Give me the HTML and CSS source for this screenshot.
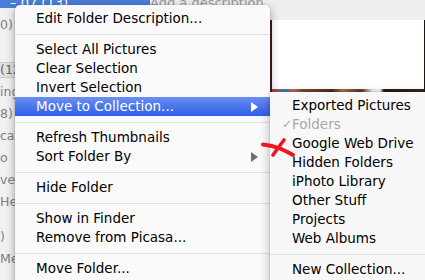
FILE: index.html
```html
<!DOCTYPE html>
<html>
<head>
<meta charset="utf-8">
<link rel="stylesheet" href="styles.css">
</head>
<body>
<div class="screen">
  <div class="bg">
    <div class="sidebar">
      <div class="selbar"><span>– 07 (13)</span></div>
      <div class="srow tall">0)</div>
      <div class="gap20"></div>
      <div class="shead">(12</div>
      <div class="gap3"></div>
      <div class="srow">ing</div>
      <div class="srow">8)</div>
      <div class="srow">cat</div>
      <div class="srow">o</div>
      <div class="srow">ve</div>
      <div class="srow">He</div>
      <div class="gap13"></div>
      <div class="srow">)</div>
      <div class="srow">Me</div>
    </div>
    <div class="main">
      <div class="desc"><span>Add a description</span></div>
      <div class="photo"><div class="photo-white"></div><div class="photo-strip"></div></div>
    </div>
  </div>

  <div class="menu">
    <div class="item">Edit Folder Description...</div>
    <div class="sep"></div>
    <div class="item">Select All Pictures</div>
    <div class="item">Clear Selection</div>
    <div class="item">Invert Selection</div>
    <div class="item active"><span>Move to Collection...</span><span class="arrow white"></span></div>
    <div class="sep"></div>
    <div class="item">Refresh Thumbnails</div>
    <div class="item"><span>Sort Folder By</span><span class="arrow"></span></div>
    <div class="sep"></div>
    <div class="item">Hide Folder</div>
    <div class="sep"></div>
    <div class="item">Show in Finder</div>
    <div class="item">Remove from Picasa...</div>
    <div class="sep"></div>
    <div class="item">Move Folder...</div>
  </div>

  <div class="submenu">
    <div class="item sub"><span class="chk"></span>Exported Pictures</div>
    <div class="item sub disabled"><span class="chk">✓</span>Folders</div>
    <div class="item sub"><span class="chk"></span>Google Web Drive</div>
    <div class="item sub"><span class="chk"></span>Hidden Folders</div>
    <div class="item sub"><span class="chk"></span>iPhoto Library</div>
    <div class="item sub"><span class="chk"></span>Other Stuff</div>
    <div class="item sub"><span class="chk"></span>Projects</div>
    <div class="item sub"><span class="chk"></span>Web Albums</div>
    <div class="sep"></div>
    <div class="item sub"><span class="chk"></span>New Collection...</div>
  </div>

  <svg class="mark" width="40" height="26" viewBox="0 0 40 26">
    <path d="M4 8.5 Q 13 9.5 21 12.5 Q 28 15.5 34 19" fill="none" stroke="#ee1620" stroke-width="4" stroke-linecap="round"/>
    <path d="M14 19 Q 19 12 25 4" fill="none" stroke="#ee1620" stroke-width="3.6" stroke-linecap="round"/>
  </svg>
</div>
</body>
</html>
```

FILE: styles.css
```css
* { box-sizing: border-box; }
html, body { margin: 0; padding: 0; }
body {
  width: 425px;
  height: 280px;
  overflow: hidden;
  background: #ececec;
  font-family: "DejaVu Sans", sans-serif;
}
.screen {
  position: relative;
  width: 425px;
  height: 280px;
  overflow: hidden;
}
.bg {
  display: flex;
  height: 280px;
}
.sidebar {
  width: 150px;
  flex: none;
  display: flex;
  flex-direction: column;
  background: #f1f1f1;
  color: #808080;
  font-size: 12.5px;
}
.selbar {
  height: 8px;
  flex: none;
  overflow: hidden;
  background: #4b7ed8;
  color: #fff;
  display: flex;
  align-items: flex-end;
  padding-left: 10px;
  font-size: 13px;
  line-height: 14px;
}
.selbar span { margin-bottom: -2px; }
.srow {
  height: 22px;
  line-height: 22px;
  flex: none;
  white-space: nowrap;
}
.srow.tall { height: 34px; line-height: 34px; }
.gap20 { height: 20px; flex: none; }
.gap3 { height: 3px; flex: none; }
.gap13 { height: 13px; flex: none; }
.shead {
  height: 16px;
  line-height: 14px;
  flex: none;
  background: #e2e2e2;
  border-top: 1px solid #c8c8c8;
  border-bottom: 1px solid #c8c8c8;
  color: #666;
}
.main {
  flex: 1;
  display: flex;
  flex-direction: column;
  background: #eeeeee;
}
.desc {
  height: 8px;
  overflow: hidden;
  display: flex;
  align-items: flex-end;
  color: #9a9a9a;
  font-size: 13px;
  line-height: 14px;
}
.desc span { margin-bottom: -2px; }
.photo {
  margin-top: 12px;
  margin-left: 120px;
  width: 155px;
  height: 72px;
  background: linear-gradient(90deg, #5a2a1c 0, #2a1a12 2px, #2a1a12 153px, #1a120e 155px);
  padding: 0 1px 0 2px;
  display: flex;
  flex-direction: column;
}
.photo-white { flex: 1; background: #fff; }
.photo-strip {
  height: 3px;
  background: linear-gradient(90deg, #b44a3a 0, #4a74b8 14px, #d46050 22px, #7a4a32 30px, #4a2e20 60px, #a07050 70px, #5a3828 90px, #e8e8e8 100px, #f4f4f4 108px, #2a1a14 112px, #3a2418 150px);
}

.menu {
  position: absolute;
  left: 15px;
  top: 5px;
  width: 255px;
  height: 290px;
  padding-top: 4px;
  background: #fafafa;
  border-radius: 5px 5px 0 0;
  box-shadow: 0 3px 10px rgba(0,0,0,0.35), 0 0 0 1px rgba(0,0,0,0.06);
  font-size: 13.5px;
}
.item {
  height: 19px;
  line-height: 19px;
  padding-left: 21px;
  padding-right: 12px;
  display: flex;
  justify-content: space-between;
  align-items: center;
  color: #000;
  white-space: nowrap;
}
.item.active {
  background: linear-gradient(#6a8ef2, #2f5ee8);
  color: #fff;
}
.arrow {
  width: 0;
  height: 0;
  border-top: 5px solid transparent;
  border-bottom: 5px solid transparent;
  border-left: 7px solid #6e6e6e;
}
.arrow.white { border-left-color: #fff; }
.sep {
  height: 12px;
  display: flex;
  align-items: center;
}
.sep::before {
  content: "";
  flex: 1;
  height: 1px;
  background: #e0e0e0;
}

.submenu {
  position: absolute;
  left: 270px;
  top: 92px;
  width: 170px;
  height: 200px;
  padding-top: 4px;
  background: #f8f8f8;
  box-shadow: 0 3px 10px rgba(0,0,0,0.3), 0 0 0 1px rgba(0,0,0,0.05);
  font-size: 13.5px;
}
.item.sub {
  padding-left: 12px;
  justify-content: flex-start;
}
.chk {
  width: 10px;
  flex: none;
  font-size: 12px;
  color: #a8a8a8;
}
.item.disabled { color: #a8a8a8; }

.mark {
  position: absolute;
  left: 259px;
  top: 136px;
  filter: blur(0.5px);
}
```
